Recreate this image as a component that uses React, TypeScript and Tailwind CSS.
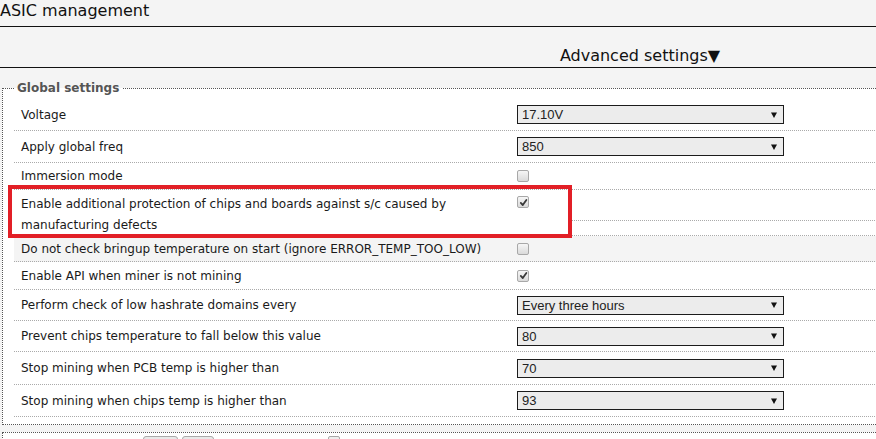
import React from 'react';

type Row = {
  label: string;
  kind: 'select' | 'check';
  value?: string;
  checked?: boolean;
  h: string;
  bg?: string;
};

const rows: Row[] = [
  { label: 'Voltage', kind: 'select', value: '17.10V', h: 'h-[32px]' },
  { label: 'Apply global freq', kind: 'select', value: '850', h: 'h-[32px]' },
  { label: 'Immersion mode', kind: 'check', checked: false, h: 'h-[27px]' },
  { label: 'Do not check bringup temperature on start (ignore ERROR_TEMP_TOO_LOW)', kind: 'check', checked: false, h: 'h-[26px]', bg: 'bg-[#f4f4f4]' },
  { label: 'Enable API when miner is not mining', kind: 'check', checked: true, h: 'h-[28px]' },
  { label: 'Perform check of low hashrate domains every', kind: 'select', value: 'Every three hours', h: 'h-[31px]' },
  { label: 'Prevent chips temperature to fall below this value', kind: 'select', value: '80', h: 'h-[31px]' },
  { label: 'Stop mining when PCB temp is higher than', kind: 'select', value: '70', h: 'h-[33px]' },
  { label: 'Stop mining when chips temp is higher than', kind: 'select', value: '93', h: 'h-[32px]' },
];

const FakeSelect = ({ value }: { value: string }) => (
  <div className="flex h-[19px] w-[267px] items-center justify-between border border-[#1c1c1c] bg-[#ececec] pl-[4px] pr-[6px] font-['Liberation_Sans',Arial,sans-serif] text-[13px] leading-none text-[#222]">
    <span>{value}</span>
    <svg width="6" height="6" viewBox="0 0 6 6">
      <path d="M0 0.5h6L3 6z" fill="#111" />
    </svg>
  </div>
);

const Check = ({ checked }: { checked?: boolean }) => (
  <div className="flex h-[12px] w-[12px] items-center justify-center rounded-[2px] border border-[#a8a8a8] bg-gradient-to-b from-[#f6f6f6] to-[#dadada]">
    {checked && (
      <svg width="9" height="9" viewBox="0 0 10 10" fill="none" stroke="#3a3a3a" strokeWidth="2" strokeLinecap="round" strokeLinejoin="round">
        <path d="M2 5.5L4.2 7.8L8.2 2.2" />
      </svg>
    )}
  </div>
);

const SettingRow = ({ row }: { row: Row }) => (
  <div className={`flex items-center border-b border-dotted border-[#aaa] ${row.h} ${row.bg ?? ''}`}>
    <div className="w-[496px] pl-[7px]">{row.label}</div>
    <div className="flex-1 pl-[7px]">
      {row.kind === 'select' ? <FakeSelect value={row.value ?? ''} /> : <Check checked={row.checked} />}
    </div>
  </div>
);

export default function App() {
  return (
    <div className="h-[439px] w-[876px] overflow-hidden bg-[#f4f4f4] font-['DejaVu_Sans',Verdana,sans-serif] text-[#1a1a1a]">
      <div className="relative w-[1280px]">
        <div className="h-[27px] border-b border-[#111] text-[16px] leading-[22px] text-[#111]">ASIC management</div>
        <div className="h-[41px] border-b border-[#111] pt-[19px] text-center text-[16px] leading-[20px] text-[#111]">
          Advanced settings▼
        </div>

        <fieldset className="mx-[2px] mt-[12px] border border-dotted border-[#555] bg-white pb-[7px] pl-[11px] text-[12px]">
          <legend className="px-[3px] text-[12px] font-bold leading-[16px] text-[#555]">Global settings</legend>
          <div className="pt-[3px]">
            {rows.slice(0, 3).map((r) => (
              <SettingRow key={r.label} row={r} />
            ))}

            <div className="flex h-[46px] border-b border-dotted border-[#aaa]">
              <div className="w-[496px] pl-[7px] pt-[4px] leading-[21px]">
                Enable additional protection of chips and boards against s/c caused by manufacturing defects
              </div>
              <div className="flex-1">
                <div className="h-[30px] pl-[7px] pt-[6px]">
                  <Check checked />
                </div>
                <div className="ml-[62px] border-b border-dotted border-[#aaa]" />
              </div>
            </div>

            {rows.slice(3).map((r) => (
              <SettingRow key={r.label} row={r} />
            ))}
          </div>
        </fieldset>

        <div className="mx-[2px] mt-[7px] h-[20px] border-l border-t border-dotted border-[#555] bg-white">
          <div className="flex items-start pl-[140px] pt-[3px]">
            <div className="h-[18px] w-[35px] rounded-[3px] border border-[#aaa] bg-[#e9e9e9]" />
            <div className="ml-[4px] h-[18px] w-[32px] rounded-[3px] border border-[#aaa] bg-[#e9e9e9]" />
            <div className="ml-[114px] h-[12px] w-[12px] rounded-[2px] border border-[#a8a8a8] bg-[#eee]" />
          </div>
        </div>

        <div className="absolute left-[8px] top-[185px] h-[53px] w-[564px] border-4 border-[#e21f26]" />
      </div>
    </div>
  );
}
